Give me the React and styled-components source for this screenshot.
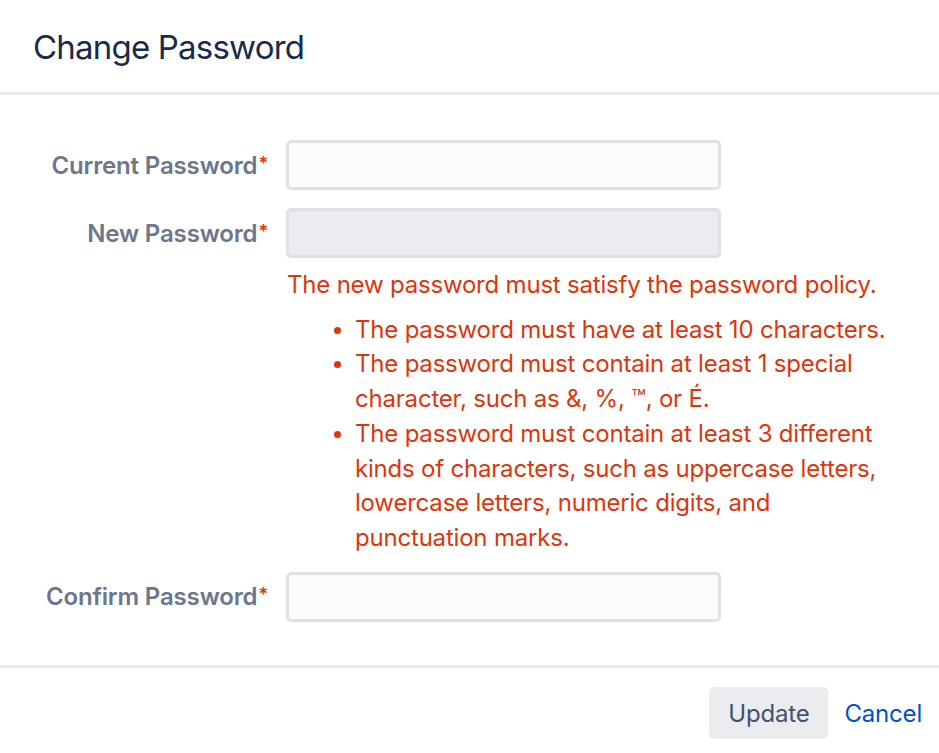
import React from "react";
import styled, { createGlobalStyle } from "styled-components";

const Global = createGlobalStyle`
  html, body { margin: 0; padding: 0; background: #fff; }
  body { font-family: Inter, "Noto Sans", sans-serif; -webkit-font-smoothing: antialiased; }
  * { box-sizing: border-box; }
`;

const Dialog = styled.div`
  width: 939px;
  height: 753px;
  display: flex;
  flex-direction: column;
  background: #fff;
  overflow: hidden;
`;

const Header = styled.header`
  height: 95px;
  padding: 26px 33px 0;
  border-bottom: 3px solid #ebecf0;
`;

const Title = styled.h2`
  margin: 0;
  font-size: 33px;
  font-weight: 400;
  letter-spacing: -0.8px;
  color: #172b4d;
  line-height: 42px;
`;

const Body = styled.form`
  height: 573px;
  padding: 45px 30px 0 0;
  display: flex;
  flex-direction: column;
  border-bottom: 3px solid #ebecf0;
`;

const Row = styled.div`
  display: grid;
  grid-template-columns: 268px 435px;
  column-gap: 18px;
  align-items: center;
  margin-top: ${(p) => p.$top || 0}px;
`;

const Label = styled.label`
  text-align: right;
  font-size: 24px;
  font-weight: 600;
  letter-spacing: -0.15px;
  color: #6b778c;
  white-space: nowrap;
`;

const Req = styled.span`
  color: #de350b;
  font-size: 18px;
  vertical-align: 4px;
  margin-left: 1px;
`;

const Input = styled.input`
  height: 50px;
  width: 435px;
  border: 3px solid #dfe1e6;
  border-radius: 5px;
  background: ${(p) => (p.$active ? "#ebecf0" : "#fafbfc")};
  outline: none;
  font: inherit;
`;

const ErrorBlock = styled.div`
  margin-left: 287px;
  color: #de350b;
  font-size: 24px;
  letter-spacing: -0.2px;
  line-height: 34.7px;
`;

const ErrorMsg = styled.div`
  margin-top: 10px;
`;

const Policy = styled.ul`
  margin: 10px 0 16px;
  padding-left: 68px;
  list-style: disc;
  li::marker { font-size: 22px; }
`;

const Footer = styled.footer`
  display: flex;
  justify-content: flex-end;
  align-items: flex-start;
  padding: 19px 0 0;
  flex: 1;
`;

const Button = styled.button`
  height: 52px;
  padding: ${(p) => (p.$link ? "0 17px 0 16px" : "0 19px")};
  border: none;
  border-radius: 5px;
  background: ${(p) => (p.$link ? "transparent" : "#ebecf0")};
  color: ${(p) => (p.$link ? "#0052cc" : "#42526e")};
  font-family: inherit;
  font-size: 24px;
  letter-spacing: -0.2px;
  cursor: pointer;
`;

export default function App() {
  return (
    <>
      <Global />
      <Dialog>
        <Header>
          <Title>Change Password</Title>
        </Header>
        <Body onSubmit={(e) => e.preventDefault()}>
          <Row>
            <Label>
              Current Password<Req>*</Req>
            </Label>
            <Input type="password" />
          </Row>
          <Row $top={18}>
            <Label>
              New Password<Req>*</Req>
            </Label>
            <Input type="password" $active />
          </Row>
          <ErrorBlock>
            <ErrorMsg>The new password must satisfy the password policy.</ErrorMsg>
            <Policy>
              <li>The password must have at least 10 characters.</li>
              <li>
                The password must contain at least 1 special character, such as &amp;, %, ™, or É.
              </li>
              <li>
                The password must contain at least 3 different kinds of characters, such as uppercase
                letters, lowercase letters, numeric digits, and punctuation marks.
              </li>
            </Policy>
          </ErrorBlock>
          <Row>
            <Label>
              Confirm Password<Req>*</Req>
            </Label>
            <Input type="password" />
          </Row>
        </Body>
        <Footer>
          <Button type="button">Update</Button>
          <Button type="button" $link>
            Cancel
          </Button>
        </Footer>
      </Dialog>
    </>
  );
}
